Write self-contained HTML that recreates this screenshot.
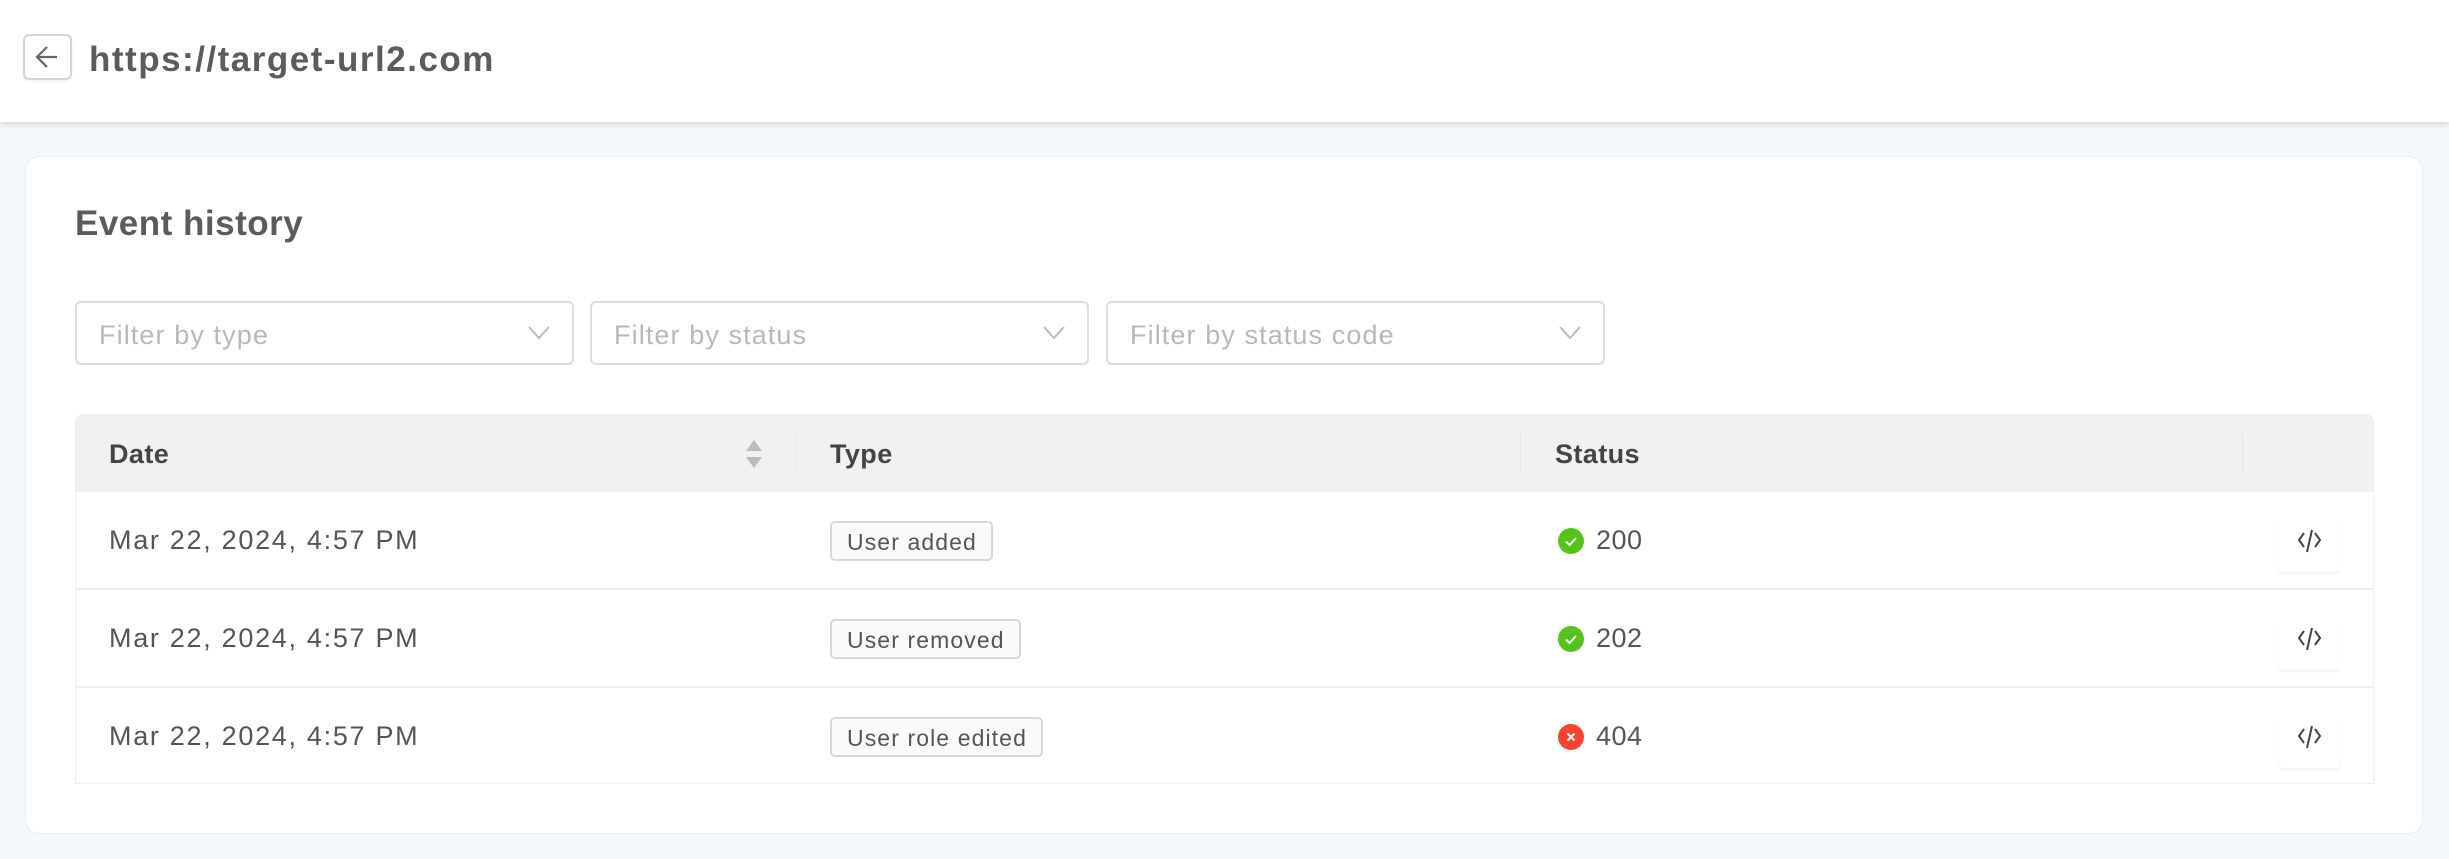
<!DOCTYPE html>
<html><head><meta charset="utf-8"><style>
*{box-sizing:border-box;margin:0;padding:0}
body{width:2449px;height:859px;background:#f5f8fb;font-family:"Liberation Sans",Arial,sans-serif;position:relative;overflow:hidden;color:#555}
.hdr{position:absolute;left:0;top:0;width:2449px;height:122px;background:#fff;box-shadow:0 3px 6px rgba(0,0,0,.12)}
.back{position:absolute;left:23px;top:34px;width:49px;height:46px;border:2px solid #d6d6d6;border-radius:6px;background:#fff;box-shadow:0 2px 2px rgba(0,0,0,.05)}
.title{position:absolute;left:89px;top:40px;font-size:35px;font-weight:bold;color:#5b5b5b;letter-spacing:1.5px}
.card{position:absolute;left:25px;top:156px;width:2398px;height:678px;background:#fff;border:1px solid #e8ebee;border-radius:14px}
.h2{position:absolute;left:75px;top:204px;font-size:35px;font-weight:bold;color:#5b5b5b;letter-spacing:0.5px}
.sel{position:absolute;top:301px;width:499px;height:64px;border:2px solid #dcdcdc;border-radius:6px;background:#fff;font-size:27px;color:#b8b8b8;padding:17px 0 0 22px;letter-spacing:1.1px}
.sel svg{position:absolute;right:22px;top:23px}
.tbl{position:absolute;left:75px;top:414px;width:2299px;height:370px;border:1px solid #eee;border-radius:8px 8px 0 0;overflow:hidden}
.th{position:absolute;left:0;top:0;width:100%;height:77px;background:#f1f1f1}
.th span{position:absolute;top:24px;font-size:27px;font-weight:bold;color:#444;letter-spacing:0.4px}
.row{position:absolute;left:0;width:100%;height:98px;border-bottom:2px solid #efefef}
.row .d{position:absolute;left:33px;top:33px;font-size:27px;color:#555;letter-spacing:1.7px}
.tag{position:absolute;left:754px;top:29px;height:40px;border:2px solid #d8d8d8;border-radius:5px;background:#fafafa;font-size:23px;color:#555;padding:6px 14px 0 15px;letter-spacing:1.1px}
.st{position:absolute;left:1482px;top:33px;font-size:27px;color:#555;padding-left:38px;letter-spacing:0.5px}
.st i{position:absolute;left:0;top:3px;width:26px;height:26px;border-radius:50%}
.code{position:absolute;left:2202px;top:28px;width:63px;height:52px;border-radius:6px;box-shadow:0 2px 2px rgba(0,0,0,.05)}
</style></head><body>
<div class="hdr">
<div class="back"><svg width="45" height="42" viewBox="0 0 45 42"><path d="M32 21H13M22 11L12 21l10 10" fill="none" stroke="#666" stroke-width="2.2"/></svg></div>
<div class="title">https://target-url2.com</div>
</div>
<div class="card"></div>
<div class="h2">Event history</div>
<div class="sel" style="left:75px">Filter by type<svg width="22" height="14"><path d="M1 1l10 11L21 1" fill="none" stroke="#bbb" stroke-width="2"/></svg></div>
<div class="sel" style="left:590px">Filter by status<svg width="22" height="14"><path d="M1 1l10 11L21 1" fill="none" stroke="#bbb" stroke-width="2"/></svg></div>
<div class="sel" style="left:1106px">Filter by status code<svg width="22" height="14"><path d="M1 1l10 11L21 1" fill="none" stroke="#bbb" stroke-width="2"/></svg></div>
<div class="tbl">
<div class="th"><span style="left:33px">Date</span>
<svg style="position:absolute;left:668px;top:23px" width="20" height="32"><path d="M10 2L18 13H2zM10 30L18 19H2z" fill="#bbb"/></svg>
<div style="position:absolute;left:720px;top:18px;width:1px;height:40px;background:#e6e6e6"></div>
<span style="left:754px">Type</span>
<div style="position:absolute;left:1444px;top:18px;width:1px;height:40px;background:#e6e6e6"></div>
<span style="left:1479px">Status</span>
<div style="position:absolute;left:2166px;top:18px;width:1px;height:40px;background:#e6e6e6"></div>
</div>
<div class="row" style="top:77px"><div class="d">Mar 22, 2024, 4:57 PM</div><div class="tag">User added</div><div class="st"><i style="background:#52c41a"><svg width="26" height="26"><path d="M8 13.5l3.5 3.5L18 10" fill="none" stroke="#fff" stroke-width="2"/></svg></i>200</div><div class="code"><svg width="63" height="40" viewBox="0 0 63 40"><path d="M26 13l-5 7 5 7M37 13l5 7-5 7M34 10l-5 22" fill="none" stroke="#444" stroke-width="2"/></svg></div></div>
<div class="row" style="top:175px"><div class="d">Mar 22, 2024, 4:57 PM</div><div class="tag">User removed</div><div class="st"><i style="background:#52c41a"><svg width="26" height="26"><path d="M8 13.5l3.5 3.5L18 10" fill="none" stroke="#fff" stroke-width="2"/></svg></i>202</div><div class="code"><svg width="63" height="40" viewBox="0 0 63 40"><path d="M26 13l-5 7 5 7M37 13l5 7-5 7M34 10l-5 22" fill="none" stroke="#444" stroke-width="2"/></svg></div></div>
<div class="row" style="top:273px"><div class="d">Mar 22, 2024, 4:57 PM</div><div class="tag">User role edited</div><div class="st"><i style="background:#f5452f"><svg width="26" height="26"><path d="M9.5 9.5l7 7M16.5 9.5l-7 7" fill="none" stroke="#fff" stroke-width="2"/></svg></i>404</div><div class="code"><svg width="63" height="40" viewBox="0 0 63 40"><path d="M26 13l-5 7 5 7M37 13l5 7-5 7M34 10l-5 22" fill="none" stroke="#444" stroke-width="2"/></svg></div></div>
</div>
</body></html>
